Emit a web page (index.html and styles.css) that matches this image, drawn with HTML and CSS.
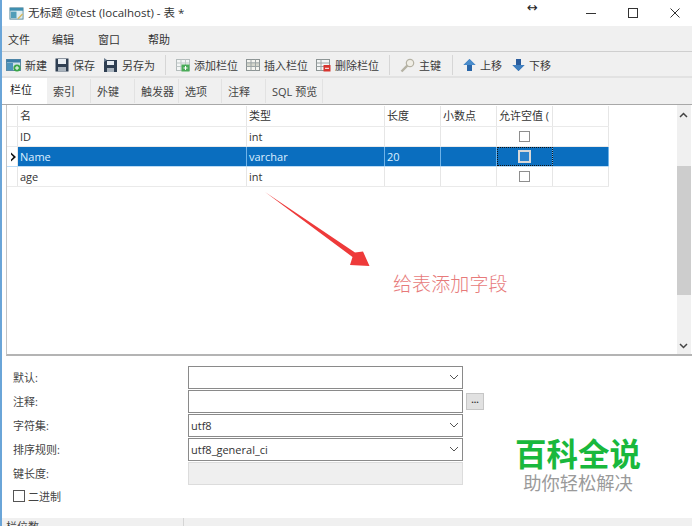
FILE: index.html
```html
<!DOCTYPE html>
<html lang="zh">
<head>
<meta charset="utf-8">
<title>无标题 @test (localhost) - 表 *</title>
<link rel="stylesheet" href="styles.css">
</head>
<body>
<div class="app">
  <header class="titlebar">
    <svg class="app-icon" width="15" height="15" viewBox="0 0 16 16"><rect x="1" y="2" width="14" height="12" fill="#dfeef2" stroke="#5f8b9c"/><rect x="1" y="2" width="14" height="3" fill="#3f8fb0"/><rect x="2" y="6" width="6" height="7" fill="#4f9db8"/><path d="M9 13l5-5 1 1-5 5z" fill="#d9b65a"/></svg>
    <span class="title">无标题 @test (localhost) - 表 *</span>
    <span class="resize">↔</span>
    <div class="winctl">
      <svg width="12" height="12" viewBox="0 0 12 12"><path d="M1 6.5h10" stroke="#333" fill="none"/></svg>
      <svg width="12" height="12" viewBox="0 0 12 12"><rect x="1.5" y="1.5" width="9" height="9" stroke="#333" fill="none"/></svg>
      <svg width="12" height="12" viewBox="0 0 12 12"><path d="M1.5 1.5l9 9M10.5 1.5l-9 9" stroke="#333" fill="none"/></svg>
    </div>
  </header>

  <nav class="menubar">
    <span class="m1">文件</span><span class="m2">编辑</span><span class="m3">窗口</span><span class="m4">帮助</span>
  </nav>

  <div class="toolbar">
    <span class="tool w-new"><svg width="15" height="14" viewBox="0 0 15 14"><rect x="0.5" y="1.5" width="14" height="11" fill="#cfe0ea" stroke="#5c8aa5"/><rect x="0.5" y="1.5" width="14" height="3" fill="#3c7ea8"/><rect x="1" y="5" width="6" height="7" fill="#4d94bb"/><circle cx="11" cy="10" r="3.6" fill="#3aa648"/><path d="M9 10h4M11 8v4" stroke="#fff"/></svg>新建</span>
    <span class="tool w-save"><svg width="14" height="14" viewBox="0 0 14 14"><path d="M0.5 0.5h13v13h-13z" fill="#2f3f52"/><rect x="3" y="1" width="8" height="5" fill="#e8edf2"/><rect x="3" y="9" width="8" height="4.5" fill="#aab4be"/></svg>保存</span>
    <span class="tool w-saveas"><svg width="15" height="14" viewBox="0 0 15 14"><path d="M1 2h13v12H1z" fill="#2f3f52"/><rect x="4" y="3" width="7" height="4" fill="#e8edf2"/><rect x="4" y="10" width="7" height="4" fill="#aab4be"/><path d="M1 0l3 2-3 2z" fill="#6a7c8e"/></svg>另存为</span>
    <i class="sep s1"></i>
    <span class="tool w-add"><svg width="14" height="14" viewBox="0 0 14 14"><rect x="0.5" y="1.5" width="13" height="11" fill="#f4f6f6" stroke="#b4bcbc"/><path d="M0.5 5h13M0.5 8.5h13M5 1.5v11M9.5 1.5v11" stroke="#bfc7c7" fill="none"/><rect x="5.5" y="6.5" width="8" height="7" fill="#4aab58"/><path d="M7.5 10h4M9.5 8v4" stroke="#fff"/></svg>添加栏位</span>
    <span class="tool w-ins"><svg width="14" height="14" viewBox="0 0 14 14"><rect x="0.5" y="1.5" width="13" height="11" fill="#f5f5f0" stroke="#8c9494"/><rect x="1" y="5" width="12" height="3.5" fill="#d4d6cc"/><path d="M0.5 4.8h13M0.5 8.5h13M5 1.5v11M9.5 1.5v11" stroke="#9ca4a4" fill="none"/></svg>插入栏位</span>
    <span class="tool w-del"><svg width="15" height="14" viewBox="0 0 15 14"><rect x="0.5" y="1.5" width="13" height="11" fill="#f4f6f6" stroke="#8c9494"/><path d="M0.5 5h13M0.5 8.5h13M5 1.5v11" stroke="#9ca4a4" fill="none"/><rect x="7.5" y="7" width="7" height="6.5" fill="#d7352f"/><path d="M9 10.3h4" stroke="#fff"/></svg>删除栏位</span>
    <i class="sep s2"></i>
    <span class="tool w-key"><svg width="15" height="15" viewBox="0 0 15 15"><circle cx="10" cy="5" r="3.7" fill="#f0eee6" stroke="#b5b2a4" stroke-width="1.2"/><path d="M7.3 7.7L1.5 13.5" stroke="#b5b2a4" stroke-width="2.4"/></svg>主键</span>
    <i class="sep s3"></i>
    <span class="tool w-up"><svg width="13" height="14" viewBox="0 0 13 14"><path d="M6.5 1L12.5 7H9V13H4V7H0.5z" fill="#2a66a8"/><path d="M6.5 1L12.5 7H0.5z" fill="#4a8ccb"/></svg>上移</span>
    <span class="tool w-down"><svg width="13" height="14" viewBox="0 0 13 14"><path d="M4 1h5v6h3.5L6.5 13 0.5 7H4z" fill="#2a5c9c"/><path d="M6.5 13L12.5 7H0.5z" fill="#3f7fc0"/></svg>下移</span>
  </div>

  <div class="tabs">
    <span class="tab active">栏位</span><span class="tab">索引</span><span class="tab">外键</span><span class="tab">触发器</span><span class="tab tab-narrow">选项</span><span class="tab">注释</span><span class="tab tab-wide">SQL 预览</span>
  </div>

  <section class="gridpanel">
    <div class="grid">
      <div class="row head"><span class="mark"></span><span>名</span><span>类型</span><span>长度</span><span>小数点</span><span>允许空值 (</span><span></span></div>
      <div class="row"><span class="mark"></span><span>ID</span><span>int</span><span></span><span></span><span class="cc"><i class="check"></i></span><span></span></div>
      <div class="row selected"><span class="mark"><svg width="7" height="10" viewBox="0 0 7 10"><path d="M1 0.5L6 5 1 9.5V7.5L3.5 5 1 2.5z" fill="#111"/></svg></span><span>Name</span><span>varchar</span><span>20</span><span></span><span class="cc focus"><i class="check"></i></span><span></span></div>
      <div class="row"><span class="mark"></span><span>age</span><span>int</span><span></span><span></span><span class="cc"><i class="check"></i></span><span></span></div>
    </div>
    <div class="scrollbar">
      <svg class="sb-arrow top" width="9" height="6" viewBox="0 0 9 6"><path d="M1 5l3.5-3.5L8 5" stroke="#444" stroke-width="1.5" fill="none"/></svg>
      <i class="thumb"></i>
      <svg class="sb-arrow bottom" width="9" height="6" viewBox="0 0 9 6"><path d="M1 1l3.5 3.500L8 1" stroke="#444" stroke-width="1.5" fill="none"/></svg>
    </div>
    <svg class="arrow" width="110" height="76" viewBox="0 0 110 76"><path d="M0 0L90 60.5 98 59.500 104.500 74 85 73 87.500 65z" fill="#ee3a3a"/></svg>
    <span class="note">给表添加字段</span>
  </section>

  <section class="form">
    <div class="frow"><label>默认:</label><div class="ctl"><svg class="chev" width="10" height="6" viewBox="0 0 10 6"><path d="M1 1l4 4 4-4" stroke="#555" fill="none"/></svg></div></div>
    <div class="frow"><label>注释:</label><div class="ctl"></div><span class="more">...</span></div>
    <div class="frow"><label>字符集:</label><div class="ctl">utf8<svg class="chev" width="10" height="6" viewBox="0 0 10 6"><path d="M1 1l4 4 4-4" stroke="#555" fill="none"/></svg></div></div>
    <div class="frow"><label>排序规则:</label><div class="ctl">utf8_general_ci<svg class="chev" width="10" height="6" viewBox="0 0 10 6"><path d="M1 1l4 4 4-4" stroke="#555" fill="none"/></svg></div></div>
    <div class="frow"><label>键长度:</label><div class="ctl disabled"></div></div>
    <div class="binary"><i class="box"></i>二进制</div>
    <div class="brand"><strong>百科全说</strong><span>助你轻松解决</span></div>
  </section>

  <footer class="status"><span class="cell">栏位数</span></footer>
</div>
</body>
</html>
```
FILE: styles.css
```css
* { box-sizing: border-box; }
html, body { margin: 0; padding: 0; }
body {
  width: 692px; height: 526px; overflow: hidden; background: #fff;
  font-family: "Open Sans", "Noto Sans CJK SC", sans-serif; font-size: 11px; color: #2b2b2b;
}
.app { width: 692px; height: 526px; display: flex; flex-direction: column; border-left: 2px solid #6aa5d8; }

.titlebar { height: 26px; flex: none; display: flex; align-items: center; padding-left: 7px; background: #fff; position: relative; }
.app-icon { flex: none; }
.title { margin-left: 4px; font-size: 11.5px; color: #333; position: relative; top: -1px; }
.resize { position: absolute; left: 525px; top: 0; font-size: 13px; line-height: 16px; color: #222; font-family: "DejaVu Sans", sans-serif; }
.winctl { margin-left: auto; display: flex; gap: 30px; padding-right: 11px; }

.menubar { height: 26px; flex: none; background: #f0f0f0; border-bottom: 1px solid #cfcfcf; display: flex; align-items: center; font-size: 11px; color: #333; }
.m1 { margin-left: 6px; }
.m2 { margin-left: 22px; }
.m3 { margin-left: 24px; }
.m4 { margin-left: 28px; }

.toolbar { height: 26px; flex: none; background: #f0f0f0; border-bottom: 2px solid #e2e2e2; display: flex; align-items: center; padding: 2px 0 0 4px; font-size: 11px; color: #3a3a3a; }
.tool { display: inline-flex; align-items: center; gap: 4px; white-space: nowrap; }
.tool svg { flex: none; }
.w-save { margin-left: 8px; }
.w-saveas { margin-left: 8px; }
.w-add, .w-key, .w-up, .w-down { margin-left: 10px; }
.w-ins, .w-del { margin-left: 8px; }
.sep { width: 1px; height: 20px; background: #d6d6d6; flex: none; }
.s1 { margin-left: 10px; }
.s2 { margin-left: 10px; }
.s3 { margin-left: 11px; }

.tabs { height: 27px; flex: none; background: #f0f0f0; display: flex; align-items: flex-end; padding-bottom: 1px; font-size: 11px; color: #444; border-bottom: 1px solid #a8a8a8; }
.tab { width: 44px; height: 24px; padding: 4px 0 0 6px; border-right: 1px solid #e2e2e2; }
.tab-narrow { width: 43px; }
.tab-wide { width: 57px; }
.tab.active { width: 45px; height: 26px; background: #fff; margin-bottom: -1px; color: #222; padding: 3px 0 0 8px; border-right: 0; }

.gridpanel { height: 251px; flex: none; position: relative; margin-left: 4px; border-left: 1px solid #c4c4c4; border-bottom: 2px solid #b4b4b4; background: #fff; display: flex; justify-content: space-between; padding-top: 1px; }
.grid { width: 602px; }
.row { display: grid; grid-template-columns: 11px 229px 138px 56px 56px 56px 56px; height: 20px; border-bottom: 1px solid #eaeaea; line-height: 19px; font-size: 11px; color: #333; }
.row.head { height: 21px; }
.row > span { border-right: 1px solid #e6e6e6; padding-left: 2px; overflow: hidden; white-space: nowrap; }
.row .mark { padding-left: 3px; display: flex; align-items: center; background: #fff; }
.row .cc { display: flex; align-items: center; justify-content: center; padding-left: 0; }
.check { width: 11px; height: 11px; border: 1px solid #8e8e8e; background: #fff; display: block; }
.selected > span { background: #0a6ebf; color: #dcefff; border-right-color: #6fb3e8; }
.selected { border-bottom-color: #bcdcf5; }
.selected .mark { background: #fff; border-right-color: #e6e6e6; }
.selected .focus { outline: 1px dotted #111; outline-offset: -1px; }
.selected .check { width: 13px; height: 13px; border: 2px solid #d8d8d8; background: #2a82cc; }
.scrollbar { width: 14px; margin: -1px 1px 0 0; background: #f0f0f0; position: relative; }
.thumb { position: absolute; left: 0; right: 0; top: 61px; height: 129px; background: #cdcdcd; }
.sb-arrow { position: absolute; left: 2px; }
.sb-arrow.top { top: 7px; }
.sb-arrow.bottom { bottom: 5px; }
.arrow { position: absolute; left: 258px; top: 87px; }
.note { position: absolute; left: 386px; top: 165px; font-size: 19px; line-height: 26px; color: #e77a7a; font-family: "Noto Sans CJK SC", sans-serif; font-weight: 300; letter-spacing: 0.1px; white-space: nowrap; }

.form { flex: 1; position: relative; background: #fff; padding: 9px 0 0 11px; }
.frow { display: flex; align-items: center; height: 24px; }
.frow label { width: 175px; font-size: 11px; color: #444; flex: none; }
.ctl { width: 275px; height: 23px; border: 1px solid #8a8a8a; display: flex; align-items: center; padding-left: 2px; font-size: 11px; color: #333; background: #fff; flex: none; }
.ctl.disabled { background: #efefef; border-color: #dcdcdc; }
.chev { margin-left: auto; margin-right: 3px; flex: none; }
.more { width: 18px; height: 17px; margin-left: 3px; border: 1px solid #c6c6c6; background: #e1e1e1; font-size: 9px; line-height: 11px; text-align: center; color: #333; font-weight: 700; margin-top: 1px; }
.binary { display: flex; align-items: center; gap: 3px; margin-top: 3px; font-size: 11px; color: #444; }
.box { width: 12px; height: 12px; border: 1px solid #555; display: block; background: #fff; }
.brand { position: absolute; left: 506px; top: 77px; width: 140px; display: flex; flex-direction: column; align-items: center; background: #fff; font-family: "Noto Sans CJK SC", sans-serif; }
.brand strong { font-size: 31.5px; line-height: 38px; color: #19b83c; font-weight: 700; white-space: nowrap; }
.brand span { font-size: 18.3px; line-height: 22px; color: #9a9a9a; font-weight: 400; white-space: nowrap; }

.status { height: 8px; flex: none; background: #f0f0f0; overflow: hidden; display: flex; }
.cell { width: 182px; padding-left: 4px; font-size: 11px; line-height: 17px; color: #444; border-right: 1px solid #d5d5d5; }
```
